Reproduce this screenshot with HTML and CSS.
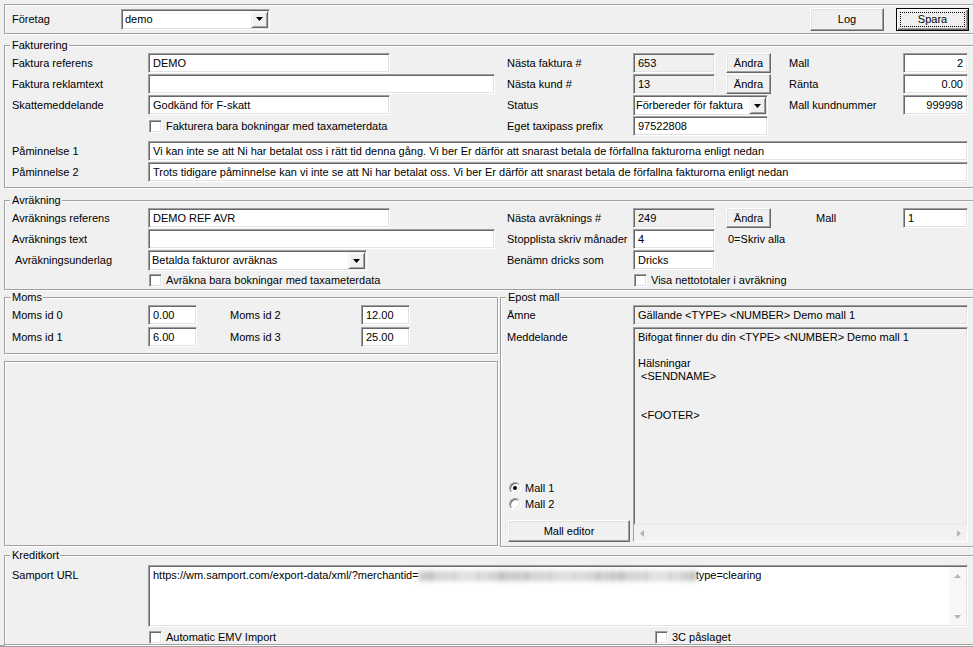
FILE: index.html
```html
<!DOCTYPE html>
<html lang="sv">
<head>
<meta charset="utf-8">
<title>Företagsinställningar</title>
<link rel="stylesheet" href="styles.css">
</head>
<body>
<div class="form">
  <div class="panel top">
    <span class="lbl lbl-foretag">Företag</span>
    <div class="combo combo-foretag"><span class="combo-text">demo</span><span class="dd"><svg width="7" height="4" viewBox="0 0 7 4"><polygon points="0,0 7,0 3.5,4" fill="#000"/></svg></span></div>
    <div class="btn btn-log">Log</div>
    <div class="btn btn-default btn-spara"><span class="focus">Spara</span></div>
  </div>

  <section class="group g-fakt">
    <span class="legend">Fakturering</span>
    <div class="grid gm">
      <span class="lbl c1">Faktura referens</span>
      <div class="tb c2 w242">DEMO</div>
      <span class="lbl c4">Nästa faktura #</span>
      <div class="tb ro c5">653</div>
      <div class="btn c7">Ändra</div>
      <span class="lbl c9">Mall</span>
      <div class="tb r c10">2</div>

      <span class="lbl c1">Faktura reklamtext</span>
      <div class="tb c2"></div>
      <span class="lbl c4">Nästa kund #</span>
      <div class="tb ro c5">13</div>
      <div class="btn c7">Ändra</div>
      <span class="lbl c9">Ränta</span>
      <div class="tb r c10">0.00</div>

      <span class="lbl c1">Skattemeddelande</span>
      <div class="tb c2 w242">Godkänd för F-skatt</div>
      <span class="lbl c4">Status</span>
      <div class="combo c5-7 w135 combo-status"><span class="combo-text">Förbereder för faktura</span><span class="dd"><svg width="7" height="4" viewBox="0 0 7 4"><polygon points="0,0 7,0 3.5,4" fill="#000"/></svg></span></div>
      <span class="lbl c9">Mall kundnummer</span>
      <div class="tb r c10">999998</div>

      <label class="chk c2"><span class="box"></span><span>Fakturera bara bokningar med taxameterdata</span></label>
      <span class="lbl c4">Eget taxipass prefix</span>
      <div class="tb c5-7 w135">97522808</div>
    </div>
    <div class="grid pam">
      <span class="lbl c1">Påminnelse 1</span>
      <div class="tb c2">Vi kan inte se att Ni har betalat oss i rätt tid denna gång. Vi ber Er därför att snarast betala de förfallna fakturorna enligt nedan</div>
      <span class="lbl c1">Påminnelse 2</span>
      <div class="tb c2">Trots tidigare påminnelse kan vi inte se att Ni har betalat oss. Vi ber Er därför att snarast betala de förfallna fakturorna enligt nedan</div>
    </div>
  </section>

  <section class="group g-avr">
    <span class="legend">Avräkning</span>
    <div class="grid gm ga">
      <span class="lbl c1">Avräknings referens</span>
      <div class="tb c2 w242">DEMO REF AVR</div>
      <span class="lbl c4">Nästa avräknings #</span>
      <div class="tb ro c5">249</div>
      <div class="btn c7">Ändra</div>
      <span class="lbl c9 mall-avr">Mall</span>
      <div class="tb c10">1</div>

      <span class="lbl c1">Avräknings text</span>
      <div class="tb c2"></div>
      <span class="lbl c4">Stopplista skriv månader</span>
      <div class="tb c5">4</div>
      <span class="lbl c7-10 hint">0=Skriv alla</span>

      <span class="lbl c1 indent">Avräkningsunderlag</span>
      <div class="combo c2 w219"><span class="combo-text">Betalda fakturor avräknas</span><span class="dd"><svg width="7" height="4" viewBox="0 0 7 4"><polygon points="0,0 7,0 3.5,4" fill="#000"/></svg></span></div>
      <span class="lbl c4">Benämn dricks som</span>
      <div class="tb c5">Dricks</div>

      <label class="chk c2 chk-row"><span class="box"></span><span>Avräkna bara bokningar med taxameterdata</span></label>
      <label class="chk c5-end chk-row"><span class="box"></span><span>Visa nettototaler i avräkning</span></label>
    </div>
  </section>

  <div class="mid">
    <div class="left-col">
      <section class="group g-moms">
        <span class="legend">Moms</span>
        <div class="grid moms">
          <span class="lbl c1">Moms id 0</span>
          <div class="tb c2">0.00</div>
          <span class="lbl c4">Moms id 2</span>
          <div class="tb c5">12.00</div>
          <span class="lbl c1">Moms id 1</span>
          <div class="tb c2">6.00</div>
          <span class="lbl c4">Moms id 3</span>
          <div class="tb c5">25.00</div>
        </div>
      </section>
      <div class="panel empty"></div>
    </div>

    <section class="group g-epost">
      <span class="legend">Epost mall</span>
      <div class="grid epost">
        <span class="lbl">Ämne</span>
        <div class="tb ro">Gällande &lt;TYPE&gt; &lt;NUMBER&gt; Demo mall 1</div>
        <div class="epost-side">
          <span class="lbl">Meddelande</span>
          <div class="radios">
            <label class="radio"><span class="rb on"></span><span>Mall 1</span></label>
            <label class="radio"><span class="rb"></span><span>Mall 2</span></label>
          </div>
          <div class="btn btn-editor">Mall editor</div>
        </div>
        <div class="ta ta-msg">
          <div class="ta-text">Bifogat finner du din &lt;TYPE&gt; &lt;NUMBER&gt; Demo mall 1

Hälsningar
 &lt;SENDNAME&gt;


 &lt;FOOTER&gt;</div>
          <div class="hscroll">
            <svg width="4" height="7" viewBox="0 0 4 7"><polygon points="4,0 4,7 0,3.5" fill="#b4b4b4"/></svg>
            <svg width="4" height="7" viewBox="0 0 4 7"><polygon points="0,0 0,7 4,3.5" fill="#b4b4b4"/></svg>
          </div>
        </div>
      </div>
    </section>
  </div>

  <section class="group g-kredit">
    <span class="legend">Kreditkort</span>
    <div class="grid kredit">
      <span class="lbl c1">Samport URL</span>
      <div class="ta ta-url c2">
        <div class="url-text">https://wm.samport.com/export-data/xml/?merchantid=<span class="blur" aria-hidden="true"></span>type=clearing</div>
        <div class="vscroll">
          <span class="arrow"><svg width="7" height="4" viewBox="0 0 7 4"><polygon points="0,4 7,4 3.5,0" fill="#b4b4b4"/></svg></span>
          <span class="arrow"><svg width="7" height="4" viewBox="0 0 7 4"><polygon points="0,0 7,0 3.5,4" fill="#b4b4b4"/></svg></span>
        </div>
      </div>
      <div class="kredit-checks c2">
        <label class="chk chk-emv"><span class="box"></span><span>Automatic EMV Import</span></label>
        <label class="chk"><span class="box"></span><span>3C påslaget</span></label>
      </div>
    </div>
  </section>
</div>
<div class="bottom-edge"></div>
</body>
</html>
```

FILE: styles.css
```css
* { box-sizing: border-box; }

html, body {
  margin: 0;
  padding: 0;
  width: 973px;
  height: 647px;
  overflow: hidden;
}

body {
  background: #f0f0f0;
  font-family: "Liberation Sans", Arial, sans-serif;
  font-size: 11px;
  line-height: 13px;
  color: #000;
}

.form {
  padding: 4px 0 0 4px;
  width: 1000px;
}

/* etched frames */
.panel,
.group {
  border: 1px solid #a0a0a0;
  box-shadow: inset 1px 1px 0 #fff, 1px 1px 0 #fff;
}

.group {
  position: relative;
  width: 990px;
}

.legend {
  position: absolute;
  top: -7px;
  left: 5px;
  padding: 0 1px 0 2px;
  background: #f0f0f0;
  line-height: 13px;
  white-space: nowrap;
}

.lbl {
  line-height: 20px;
  white-space: nowrap;
}

/* sunken controls */
.tb, .combo, .ta, .box, .rb {
  border: 1px solid;
  border-color: #a0a0a0 #fff #fff #a0a0a0;
  box-shadow: inset 1px 1px 0 #696969, inset -1px -1px 0 #e3e3e3;
  background: #fff;
}

.tb {
  height: 20px;
  padding: 0 4px;
  line-height: 18px;
  white-space: nowrap;
  overflow: hidden;
}

.tb.ro { background: #f0f0f0; }
.tb.r { text-align: right; }

.w242 { width: 242px; }
.w135 { width: 135px; }
.w219 { width: 219px; }

.combo {
  height: 21px;
  display: flex;
  align-items: center;
  padding: 0 1px 0 3px;
}

.combo-text {
  flex: 1;
  white-space: nowrap;
  overflow: hidden;
}

.combo-status { padding-left: 2px; }

.dd {
  width: 17px;
  height: 17px;
  display: flex;
  align-items: center;
  justify-content: center;
  background: #f0f0f0;
  border: 1px solid;
  border-color: #f0f0f0 #696969 #696969 #f0f0f0;
  box-shadow: inset 1px 1px 0 #fff, inset -1px -1px 0 #a0a0a0;
}

/* raised buttons */
.btn {
  height: 20px;
  display: flex;
  align-items: center;
  justify-content: center;
  background: #f0f0f0;
  border: 1px solid;
  border-color: #fff #696969 #696969 #fff;
  box-shadow: inset -1px -1px 0 #a0a0a0, inset 1px 1px 0 #e3e3e3;
  white-space: nowrap;
}

.btn-default {
  border: 1px solid #000;
  box-shadow: inset 1px 1px 0 #fff, inset -1px -1px 0 #696969, inset -2px -2px 0 #a0a0a0;
  padding: 3px;
}

.focus {
  flex: 1;
  align-self: stretch;
  display: flex;
  align-items: center;
  justify-content: center;
  border: 1px dotted #000;
}

/* checkboxes and radios */
.chk {
  display: flex;
  align-items: center;
  gap: 4px;
  white-space: nowrap;
}

.box {
  width: 13px;
  height: 13px;
  flex: none;
  margin-left: 1px;
}

.radio {
  display: flex;
  align-items: center;
  gap: 4px;
  height: 16px;
  padding-left: 2px;
}

.rb {
  width: 12px;
  height: 12px;
  border-radius: 50%;
  display: flex;
  align-items: center;
  justify-content: center;
}

.rb.on::after {
  content: "";
  width: 4px;
  height: 4px;
  border-radius: 50%;
  background: #000;
}

/* top panel */
.top {
  width: 990px;
  height: 30px;
  display: flex;
  align-items: center;
  padding-left: 7px;
}

.lbl-foretag { width: 109px; }
.combo-foretag { width: 149px; }

.btn-log {
  height: 23px;
  width: 74px;
  margin-left: 540px;
}

.btn-spara {
  height: 23px;
  width: 73px;
  margin-left: 12px;
}

/* grid helpers */
.grid {
  display: grid;
  align-items: start;
}

.c1 { grid-column: 1; }
.c2 { grid-column: 2; }
.c4 { grid-column: 4; }
.c5 { grid-column: 5; }
.c7 { grid-column: 7; }
.c9 { grid-column: 9; }
.c10 { grid-column: 10; }
.c5-7 { grid-column: 5 / 8; }
.c7-10 { grid-column: 7 / 11; }
.c5-end { grid-column: 5 / 11; }

/* Fakturering */
.g-fakt {
  margin-top: 11px;
  padding: 7px 0 4px 7px;
}

.gm {
  grid-template-columns: 136px 347px 12px 126px 82px 11px 45px 18px 114px 65px;
  grid-auto-rows: 21px;
}

.gm .chk { height: 21px; }

.pam {
  margin-top: 4px;
  grid-template-columns: 136px 820px;
  grid-auto-rows: 21px;
}

/* Avräkning */
.g-avr {
  margin-top: 12px;
  padding: 7px 0 1px 7px;
}

.ga { grid-template-rows: 21px 21px 21px 17px; }
.ga .chk-row { height: 19px; }

.mall-avr { padding-left: 27px; }
.hint { padding-left: 2px; }
.indent { padding-left: 3px; }

/* middle section */
.mid {
  display: flex;
  margin-top: 7px;
}

.left-col {
  width: 494px;
  flex: none;
  display: flex;
  flex-direction: column;
}

.g-moms {
  width: 494px;
  padding: 7px 0 4px 7px;
}

.moms {
  grid-template-columns: 136px 49px 33px 131px 49px;
  grid-auto-rows: 22px;
}

.empty {
  margin-top: 7px;
  height: 185px;
}

.g-epost {
  flex: none;
  width: 490px;
  margin-left: 2px;
  padding: 7px 0 4px 6px;
}

.epost {
  grid-template-columns: 126px 335px;
  grid-template-rows: 22px 215px;
}

.epost-side {
  height: 215px;
  display: flex;
  flex-direction: column;
}

.radios {
  margin-top: auto;
}

.btn-editor {
  margin-top: 8px;
  margin-left: 1px;
  width: 122px;
  height: 22px;
}

.ta-msg {
  height: 215px;
  background: #f0f0f0;
  display: flex;
  flex-direction: column;
}

.ta-text {
  padding: 3px 0 0 4px;
  white-space: pre;
  line-height: 13px;
}

.hscroll {
  margin-top: auto;
  height: 17px;
  display: flex;
  align-items: center;
  justify-content: space-between;
  padding: 0 6px 0 6px;
  background: #f2f2f2;
  border-top: 1px solid #e8e8e8;
}

/* Kreditkort */
.g-kredit {
  margin-top: 8px;
  padding: 9px 0 0 7px;
}

.kredit {
  grid-template-columns: 136px 820px;
}

.ta-url {
  height: 62px;
  display: flex;
}

.url-text {
  flex: 1;
  padding: 3px 0 0 4px;
  white-space: nowrap;
  overflow: hidden;
}

.blur {
  display: inline-block;
  width: 277px;
  height: 10px;
  margin-top: 2px;
  vertical-align: top;
  background:
    linear-gradient(90deg, rgba(255,255,255,0) 0, rgba(255,255,255,0.5) 18%, rgba(255,255,255,0) 32%, rgba(255,255,255,0.45) 55%, rgba(255,255,255,0) 70%, rgba(255,255,255,0.5) 88%, rgba(255,255,255,0) 100%),
    repeating-linear-gradient(90deg,
      #bdbdbd 0 5px, #d8d8d8 5px 8px, #b2b2b2 8px 14px, #dedede 14px 16px,
      #c4c4c4 16px 21px, #d2d2d2 21px 24px);
  filter: blur(2.4px);
}

.vscroll {
  width: 17px;
  flex: none;
  margin: 1px 1px 1px 0;
  background: #f7f7f7;
  display: flex;
  flex-direction: column;
  justify-content: space-between;
}

.arrow {
  height: 17px;
  display: flex;
  align-items: center;
  justify-content: center;
}

.kredit-checks {
  display: flex;
  margin-top: 4px;
  height: 13px;
}

.chk-emv { width: 506px; }

.bottom-edge {
  height: 2px;
  background: #a0a0a0;
}
```
